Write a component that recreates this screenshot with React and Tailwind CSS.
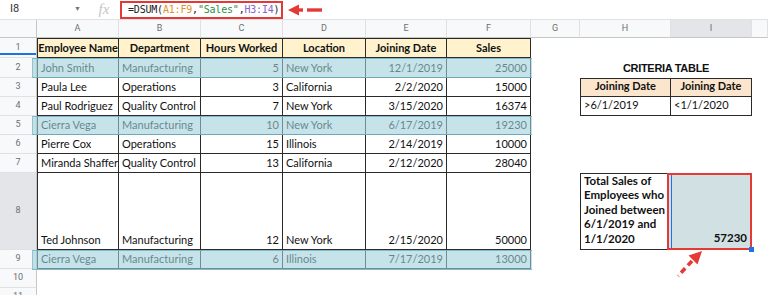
import React from 'react';

const people = [
  ['John Smith', 'Manufacturing', '5', 'New York', '12/1/2019', '25000'],
  ['Paula Lee', 'Operations', '3', 'California', '2/2/2020', '15000'],
  ['Paul Rodriguez', 'Quality Control', '7', 'New York', '3/15/2020', '16374'],
  ['Cierra Vega', 'Manufacturing', '10', 'New York', '6/17/2019', '19230'],
  ['Pierre Cox', 'Operations', '15', 'Illinois', '2/14/2019', '10000'],
  ['Miranda Shaffer', 'Quality Control', '13', 'California', '2/12/2020', '28040'],
  ['Ted Johnson', 'Manufacturing', '12', 'New York', '2/15/2020', '50000'],
  ['Cierra Vega', 'Manufacturing', '6', 'Illinois', '7/17/2019', '13000'],
];

const headers = ['Employee Name', 'Department', 'Hours Worked', 'Location', 'Joining Date', 'Sales'];
const letters = ['A', 'B', 'C', 'D', 'E', 'F', 'G', 'H', 'I', ''];

function ColHead({ label, active }) {
  return (
    <div
      className={`flex items-center justify-center border-r border-b border-r-[#e1e1e1] border-b-[#c4c7c5] text-[9px] text-[#6b6f73] [font-family:Roboto,sans-serif] ${
        active ? 'bg-[#e3e5e8]' : 'bg-[#f8f9fa]'
      }`}
    >
      {label}
    </div>
  );
}

function RowHead({ n, active }) {
  return (
    <div
      className={`relative flex items-center justify-center border-r border-b border-r-[#c4c7c5] border-b-[#e1e1e1] text-[9px] text-[#6b6f73] [font-family:Roboto,sans-serif] ${
        active ? 'bg-[#e3e5e8]' : 'bg-[#f8f9fa]'
      }`}
    >
      {n}
      {n === 1 && <div className="absolute left-0 right-0 bottom-[2px] h-[2px] bg-[#1a73e8]" />}
    </div>
  );
}

function Cell({ children, right, first, top, head }) {
  return (
    <div
      className={`flex items-end overflow-hidden whitespace-nowrap px-[3px] pb-[2px] leading-[15px] border-r border-b border-[#2a2a2a] ${
        first ? 'border-l' : ''
      } ${top ? 'border-t' : ''} ${head ? 'justify-center font-bold bg-[#fff2cc]' : right ? 'justify-end' : 'justify-start'}`}
    >
      {children}
    </div>
  );
}

const Empty = () => <div />;

function RightSide({ n }) {
  if (n === 2) {
    return (
      <>
        <Empty />
        <div className="col-span-2 flex items-end justify-center pb-[2px] font-bold text-[11px] text-[#111] [font-family:'Liberation_Sans',sans-serif] tracking-[-0.3px]">
          CRITERIA TABLE
        </div>
        <Empty />
      </>
    );
  }
  if (n === 3) {
    return (
      <>
        <Empty />
        <div className="flex items-end justify-center pb-[2px] font-bold bg-[#fce5cd] border border-[#2a2a2a]">Joining Date</div>
        <div className="flex items-end justify-center pb-[2px] font-bold bg-[#fce5cd] border-t border-r border-b border-[#2a2a2a]">Joining Date</div>
        <Empty />
      </>
    );
  }
  if (n === 4) {
    return (
      <>
        <Empty />
        <div className="flex items-end px-[3px] pb-[2px] border-l border-r border-b border-[#2a2a2a]">&gt;6/1/2019</div>
        <div className="flex items-end px-[3px] pb-[2px] border-r border-b border-[#2a2a2a]">&lt;1/1/2020</div>
        <Empty />
      </>
    );
  }
  if (n === 8) {
    return (
      <>
        <Empty />
        <div className="flex items-end px-[3px] pb-[3px] font-bold text-[11.5px] leading-[14.5px] border border-[#2a2a2a]">
          <div>
            Total Sales of
            <br />
            Employees who
            <br />
            Joined between
            <br />
            6/1/2019 and
            <br />
            1/1/2020
          </div>
        </div>
        <div className="relative flex items-end justify-end px-[3px] pb-[2px] font-bold text-[11.5px] bg-[#d0e0e3] border-2 border-[#e53935] -ml-[4px]">
          <div className="absolute left-[2px] top-0 bottom-0 w-[1px] bg-[#1a73e8]" />
          57230
          <div className="absolute -right-[4px] -bottom-[4px] w-[5px] h-[5px] bg-[#1a73e8]" />
        </div>
        <Empty />
      </>
    );
  }
  return (
    <>
      <Empty />
      <Empty />
      <Empty />
      <Empty />
    </>
  );
}

function Band({ top }) {
  return (
    <div className={`absolute left-[32px] w-[500px] ${top} bg-[#9ed0da]/60 border-y border-[#6fb0c0]/80 border-l border-l-[#6fb0c0]/60`} />
  );
}

export default function App() {
  const rows = [1, 2, 3, 4, 5, 6, 7, 8, 9, 10, 11];

  return (
    <div className="relative w-[768px] h-[295px] overflow-hidden bg-white text-[11px] text-[#111] [font-family:Lato,sans-serif]">
      {/* formula bar */}
      <div className="flex items-center h-[20px] border-b border-[#e1e1e1] [font-family:Roboto,sans-serif]">
        <div className="flex items-center justify-between w-[88px] pl-[10px] pr-[7px] text-[11px] text-[#333]">
          <span>I8</span>
          <span className="text-[7px] text-[#777]">▼</span>
        </div>
        <div className="w-[32px] text-center text-[15px] italic text-[#c4c4c4] [font-family:'Liberation_Serif',serif] leading-none">
          fx
        </div>
        <div className="flex items-center h-[18px] w-[163px] pl-[6px] border-2 border-[#e53935] text-[10px] tracking-[-0.2px] [font-family:'DejaVu_Sans_Mono',monospace] text-[#222]">
          =DSUM(<span className="text-[#e0932c]">A1:F9</span>,<span className="text-[#2f8f46]">"Sales"</span>,
          <span className="text-[#8b62c9]">H3:I4</span>)
        </div>
        <svg className="ml-[3px]" width="38" height="14" viewBox="0 0 38 14">
          <polygon points="2,7 13,1.5 13,12.5" fill="#e53935" />
          <rect x="12" y="5.3" width="5" height="3.4" fill="#e53935" />
          <rect x="21" y="5.3" width="15" height="3.4" fill="#e53935" />
        </svg>
      </div>

      {/* sheet */}
      <div className="grid grid-cols-[37px_82px_82px_82px_83px_81px_84px_49px_91px_81px_16px] grid-rows-[18px_20px_20px_19px_19px_19px_19px_19px_77px_19px_19px_19px]">
        <div className="bg-[#f8f9fa] border-r border-b border-[#c4c7c5]" />
        {letters.map((l, i) => (
          <ColHead key={i} label={l} active={l === 'I'} />
        ))}

        {rows.map((n) => (
          <React.Fragment key={n}>
            <RowHead n={n} active={n === 8} />
            {n === 1 &&
              headers.map((h, i) => (
                <Cell key={i} head top first={i === 0}>
                  {h}
                </Cell>
              ))}
            {n >= 2 &&
              n <= 9 &&
              people[n - 2].map((v, i) => (
                <Cell key={i} first={i === 0} right={i === 2 || i === 4 || i === 5}>
                  {v}
                </Cell>
              ))}
            {n >= 10 && (
              <>
                <Empty />
                <Empty />
                <Empty />
                <Empty />
                <Empty />
                <Empty />
              </>
            )}
            <RightSide n={n} />
          </React.Fragment>
        ))}
      </div>

      {/* highlighted rows */}
      <Band top="top-[58px] h-[20px]" />
      <Band top="top-[116px] h-[19px]" />
      <Band top="top-[250px] h-[20px]" />

      {/* dashed arrow to result */}
      <svg className="absolute left-[670px] top-[246px]" width="36" height="34" viewBox="0 0 36 34">
        <polygon points="32,5 18.5,9.5 27.5,18.5" fill="#e53935" />
        <line x1="22" y1="15" x2="8" y2="30" stroke="#e53935" strokeWidth="3.6" strokeDasharray="6 4" />
      </svg>
    </div>
  );
}
